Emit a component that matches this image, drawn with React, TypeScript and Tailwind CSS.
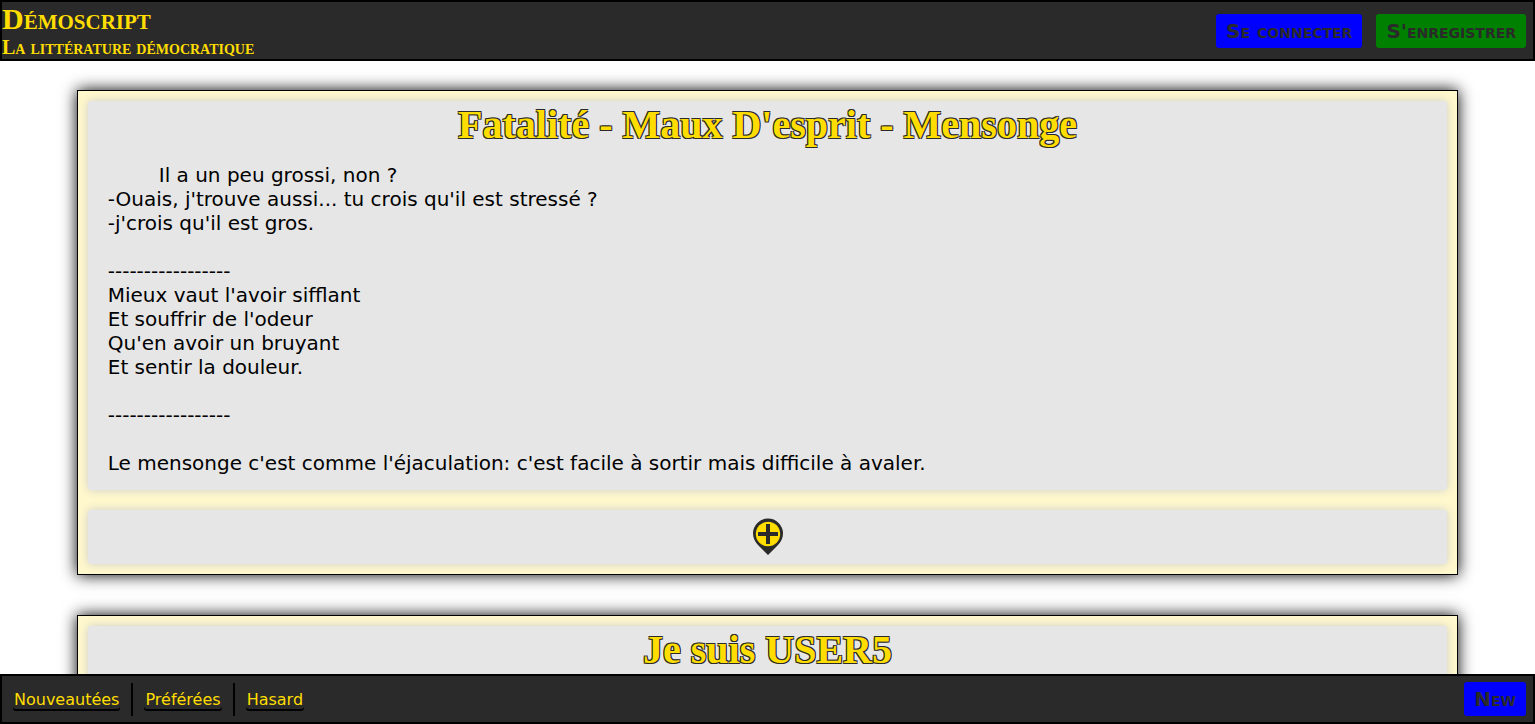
import type { ReactNode } from "react";

const actionClass =
  "rounded-[3px] px-[10px] py-[5px] font-['DejaVu_Sans',sans-serif] text-[20px] leading-[24px] font-bold text-[#2a2a2a] [font-variant:small-caps]";

const sections = [
  { label: "Nouveautées", href: "#nouveautees" },
  { label: "Préférées", href: "#preferees" },
  { label: "Hasard", href: "#hasard" },
];

const story = `Il a un peu grossi, non ?
-Ouais, j'trouve aussi... tu crois qu'il est stressé ?
-j'crois qu'il est gros.

-----------------
Mieux vaut l'avoir sifflant
Et souffrir de l'odeur
Qu'en avoir un bruyant
Et sentir la douleur.

-----------------

Le mensonge c'est comme l'éjaculation: c'est facile à sortir mais difficile à avaler.`;

function Panel({ children }: { children: ReactNode }) {
  return (
    <div className="rounded-[3px] bg-[#e6e6e6] shadow-[0_0_10px_#cccccc]">{children}</div>
  );
}

function Story({ title, children }: { title: string; children?: ReactNode }) {
  return (
    <article className="mx-auto flex w-[90%] flex-col gap-5 border border-black bg-[#fff8cc] p-[10px] shadow-[0_0_15px_black]">
      <Panel>
        <h2 className="text-center font-['Liberation_Serif',serif] text-[40px] leading-[47px] font-bold text-[#ffdd00] [text-shadow:-1px_-1px_#2a2a2a,1px_-1px_#2a2a2a,-1px_1px_#2a2a2a,1px_1px_#2a2a2a]">
          {title}
        </h2>
        <p className="px-5 py-[15px] indent-[51px] text-[20px] leading-[24px] whitespace-pre-line text-black">
          {children}
        </p>
      </Panel>
      <Panel>
        <div className="flex justify-center pt-2 pb-[9px]">
          <button type="button" aria-label="Ajouter une suite">
            <svg width="30" height="37" viewBox="0 0 30 37" className="block">
              <path d="M15 0.5A15 15 0 0 0 0 15.5C0 20 2 24 5 27L15 37L25 27C28 24 30 20 30 15.5A15 15 0 0 0 15 0.5Z" fill="#2a2a2a" />
              <circle cx="15" cy="16" r="12.2" fill="#ffdd00" />
              <path d="M15 6V26M5 16H25" stroke="#2a2a2a" strokeWidth="4" />
            </svg>
          </button>
        </div>
      </Panel>
    </article>
  );
}

export default function App() {
  return (
    <div className="flex h-screen flex-col bg-white font-['DejaVu_Sans',sans-serif]">
      <header className="flex shrink-0 items-center justify-between border-2 border-black bg-[#2a2a2a] pr-[7px]">
        <div className="font-['Liberation_Serif',serif] font-bold text-[#ffdd00] [font-variant:small-caps]">
          <h1 className="text-[30px] leading-[34px]">Démoscript</h1>
          <p className="text-[20px] leading-[23px]">La littérature démocratique</p>
        </div>
        <div className="flex gap-[14px]">
          <button type="button" className={`${actionClass} bg-[#0000ff]`}>Se connecter</button>
          <button type="button" className={`${actionClass} bg-[#008000]`}>S'enregistrer</button>
        </div>
      </header>

      <main className="flex min-h-0 flex-1 flex-col gap-10 overflow-y-auto pt-[29px] pb-10 [scrollbar-width:none]">
        <Story title="Fatalité - Maux D'esprit - Mensonge">{story}</Story>
        <Story title="Je suis USER5" />
      </main>

      <footer className="flex shrink-0 items-center justify-between border-2 border-black bg-[#2a2a2a] py-[6px] pr-[7px]">
        <nav className="flex divide-x-2 divide-black">
          {sections.map((s) => (
            <div key={s.label} className="flex items-center px-[11px] py-[7px]">
              <a
                href={s.href}
                className="rounded-[3px] bg-[#2a2a2a] px-px text-[16px] leading-[19px] text-[#ffdd00] shadow-[0_2px_black]"
              >
                {s.label}
              </a>
            </div>
          ))}
        </nav>
        <button type="button" className={`${actionClass} bg-[#0000ff]`}>New</button>
      </footer>
    </div>
  );
}
